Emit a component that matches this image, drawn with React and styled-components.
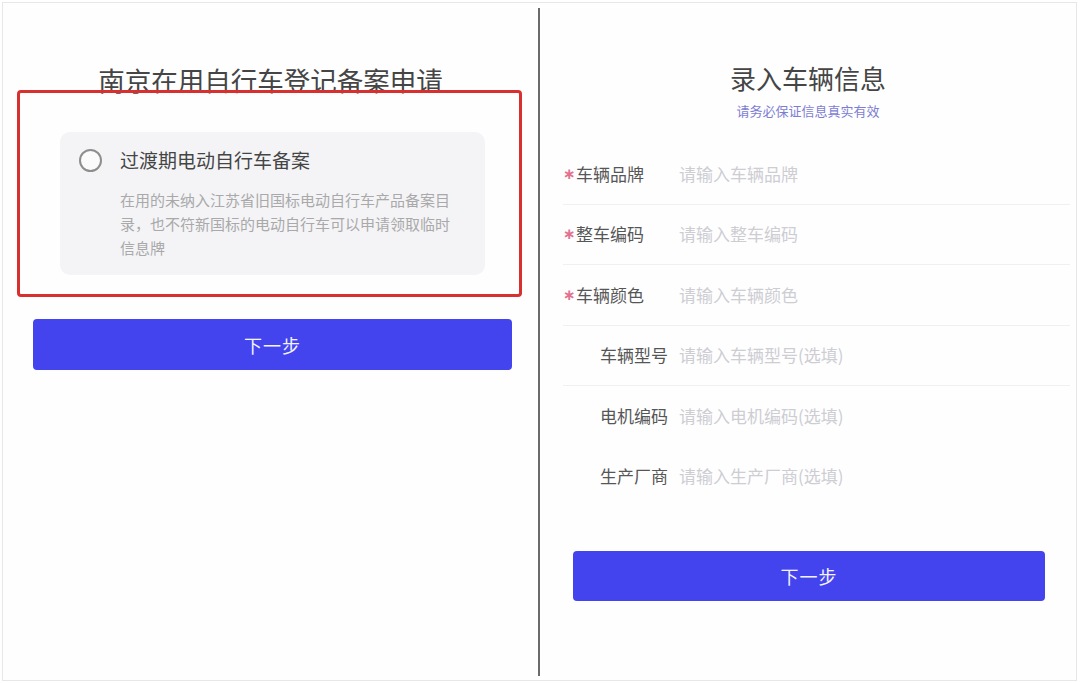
import React from "react";
import styled, { createGlobalStyle } from "styled-components";

const Global = createGlobalStyle`
  html, body { margin: 0; padding: 0; background: #ffffff; }
  body { font-family: "Noto Sans CJK SC", "Noto Sans", sans-serif; }
  * { box-sizing: border-box; }
`;

const Frame = styled.div`
  margin: 2px 0 0 2px;
  width: 1075px;
  height: 679px;
  border: 1px solid #e7e7e9;
  display: flex;
  background: #fefeff;
`;

const Panel = styled.section`
  flex: ${(p) => (p.$width ? `0 0 ${p.$width}px` : "1 1 auto")};
  display: flex;
  flex-direction: column;
  padding-top: ${(p) => p.$top || 57}px;
`;

const Divider = styled.div`
  flex: 0 0 2px;
  margin: 5px 0 4px;
  background: #6b6b6b;
`;

const Title = styled.h1`
  margin: 0;
  font-size: ${(p) => p.$size || 26}px;
  line-height: 36px;
  font-weight: 400;
  color: #454545;
  text-align: center;
`;

const Subtitle = styled.p`
  margin: 6px 0 0;
  font-size: 13px;
  line-height: 18px;
  color: #7d7dd2;
  text-align: center;
`;

const Highlight = styled.div`
  position: relative;
  margin: -8px 16px 0 14px;
  border: 3px solid #d8302f;
  border-radius: 4px;
  padding: 39px 34px 19px 40px;
`;

const OptionCard = styled.div`
  background: #f4f4f7;
  border-radius: 10px;
  padding: 16px 30px 15px 19px;
  display: grid;
  grid-template-columns: 22px 1fr;
  column-gap: 19px;
  row-gap: 16px;
  align-items: center;
`;

const Radio = styled.span`
  width: 23px;
  height: 23px;
  border-radius: 50%;
  border: 2px solid #8e8e8e;
  background: #fbfbfc;
  justify-self: center;
`;

const OptionTitle = styled.div`
  font-size: 19px;
  line-height: 24px;
  color: #454545;
`;

const OptionDesc = styled.p`
  grid-column: 2;
  margin: 0;
  font-size: 15px;
  line-height: 24px;
  color: #a9a9a9;
`;

const PrimaryButton = styled.button`
  display: block;
  height: ${(p) => p.$h}px;
  margin: ${(p) => p.$margin};
  border: none;
  border-radius: 4px;
  background: #4444ef;
  color: #f4f4ff;
  font-family: inherit;
  font-size: 18px;
  letter-spacing: 1px;
  cursor: pointer;
`;

const Form = styled.div`
  margin: 24px 6px 0 23px;
  display: flex;
  flex-direction: column;
`;

const Row = styled.div`
  height: 60.5px;
  display: flex;
  align-items: center;
  border-bottom: 1px solid ${(p) => (p.$divider ? "#f0f0f3" : "transparent")};
`;

const Label = styled.div`
  flex: 0 0 105px;
  display: flex;
  align-items: center;
  justify-content: ${(p) => (p.$required ? "flex-start" : "flex-end")};
  font-size: 17px;
  line-height: 24px;
  color: #565656;
`;

const Star = styled.span`
  width: 13px;
  font-family: "DejaVu Sans", sans-serif;
  font-size: 15px;
  font-weight: 700;
  color: #e2728e;
  line-height: 24px;
`;

const Placeholder = styled.div`
  margin-left: 11px;
  font-size: 17px;
  line-height: 24px;
  color: #cdcdd2;
`;

const fields = [
  { label: "车辆品牌", ph: "请输入车辆品牌", required: true, divider: true },
  { label: "整车编码", ph: "请输入整车编码", required: true, divider: true },
  { label: "车辆颜色", ph: "请输入车辆颜色", required: true, divider: true },
  { label: "车辆型号", ph: "请输入车辆型号(选填)", required: false, divider: true },
  { label: "电机编码", ph: "请输入电机编码(选填)", required: false, divider: false },
  { label: "生产厂商", ph: "请输入生产厂商(选填)", required: false, divider: false },
];

export default function App() {
  return (
    <>
      <Global />
      <Frame>
        <Panel $width={535} $top={59}>
          <Title $size={26.5}>南京在用自行车登记备案申请</Title>
          <Highlight>
            <OptionCard>
              <Radio />
              <OptionTitle>过渡期电动自行车备案</OptionTitle>
              <OptionDesc>
                在用的未纳入江苏省旧国标电动自行车产品备案目录，也不符新国标的电动自行车可以申请领取临时信息牌
              </OptionDesc>
            </OptionCard>
          </Highlight>
          <PrimaryButton $h={51} $margin="22px 26px 0 30px">下一步</PrimaryButton>
        </Panel>
        <Divider />
        <Panel>
          <Title>录入车辆信息</Title>
          <Subtitle>请务必保证信息真实有效</Subtitle>
          <Form>
            {fields.map((f) => (
              <Row key={f.label} $divider={f.divider}>
                <Label $required={f.required}>
                  {f.required && <Star>∗</Star>}
                  {f.label}
                </Label>
                <Placeholder>{f.ph}</Placeholder>
              </Row>
            ))}
          </Form>
          <PrimaryButton $h={50} $margin="44px 31px 0 33px">下一步</PrimaryButton>
        </Panel>
      </Frame>
    </>
  );
}
